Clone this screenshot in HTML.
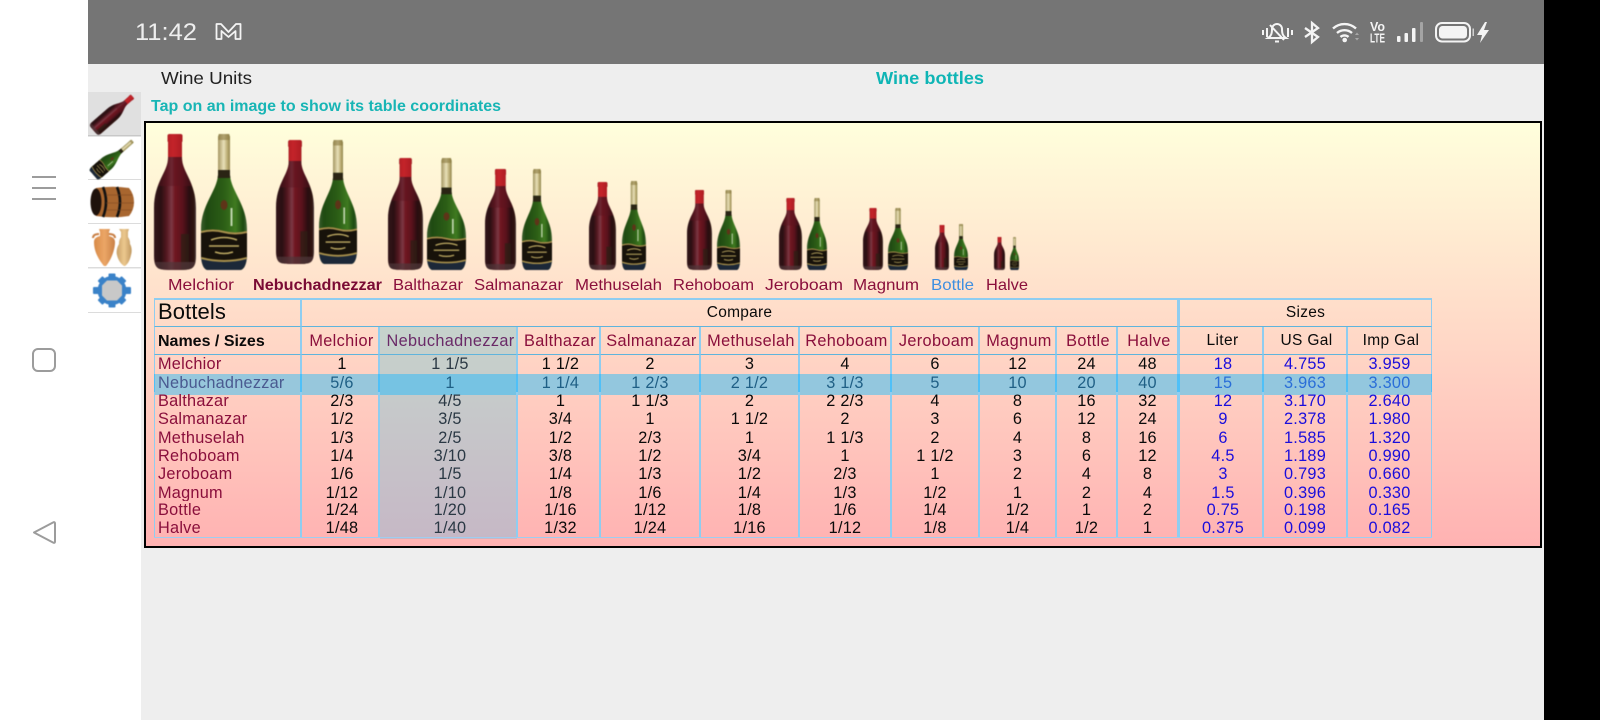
<!DOCTYPE html>
<html lang="en"><head><meta charset="utf-8"><title>Wine Units</title>
<style>
html,body{margin:0;padding:0;width:1600px;height:720px;overflow:hidden;background:#eee;font-family:"Liberation Sans",sans-serif}
.a{position:absolute}
#nav{left:0;top:0;width:88px;height:720px;background:#fff}
#side{left:88px;top:92px;width:53px;height:628px;background:#fff}
#blk{left:1544px;top:0;width:56px;height:720px;background:#000}
#bar{left:88px;top:0;width:1456px;height:64px;background:#757575}
#panel{left:144px;top:121px;width:1398px;height:427px;box-sizing:border-box;border:2px solid #000;background:linear-gradient(#ffffdc,#ffb2b2)}
#gray{left:380px;top:327px;width:137px;height:212px;background:linear-gradient(#c6d3cc,#c6b8c6)}
#hl{left:154px;top:374px;width:1278px;height:21px;background:linear-gradient(90deg,#97c7dc 0,#97c7dc 225px,#76c3e3 226px,#76c3e3 363px,#93c7de 364px)}
table{position:absolute;left:154px;top:298px;width:1278px;table-layout:fixed;border-collapse:separate;border-spacing:0;border-bottom:1px solid #9fcdf0;font-size:16.3px;color:#0a0a0a}
td{padding:1px 0 0;margin:0;text-align:center;vertical-align:top;box-sizing:border-box;border-left:1px solid #8fcdf0;border-right:1px solid #8fcdf0;line-height:16px;white-space:nowrap;overflow:hidden;letter-spacing:.25px}
.h1 td{padding:0;vertical-align:middle;border-top:2px solid #8fcdf0;border-bottom:1px solid #5fb4dc;font-size:15.5px;line-height:18px}
.h2 td{padding:0 0 0 3px;vertical-align:middle;border-bottom:1px solid #5fb4dc;color:#8a0f3c;letter-spacing:.35px;line-height:18px}
td.k{color:#0a0a0a;font-size:15.5px}
td.l{text-align:left;padding-left:3px;color:#8a0f3c}
.h1 td.l{font-size:22px;color:#0a0a0a;padding:0 0 2px 3px;letter-spacing:.1px}
.h2 td.l{font-weight:bold;color:#0a0a0a;padding:2px 0 0 3px;font-size:16px;letter-spacing:0}
.h2 td.g{padding-left:5px}
td.b{color:#1a0ddc}
td.g{color:#2a3844}
.h2 td.g{color:#6a2a68}
td.x{border-left-width:2px}
.d td:nth-child(2),.d td:nth-child(3),.d td:nth-child(4),.d td:nth-child(12){padding-left:4px}
.d td.l{padding-left:3px}
.s td{color:#1f5f85;border-color:#4fc0f8}
.s td.l{color:#4a5a90}
.s td.b{color:#2a6ed8}
</style></head><body>
<svg width="0" height="0" style="position:absolute">
<defs>
<linearGradient id="rg"><stop offset="0" stop-color="#33161a"/><stop offset=".16" stop-color="#2a0f12"/><stop offset=".3" stop-color="#541820"/><stop offset=".42" stop-color="#7c3844"/><stop offset=".5" stop-color="#701620"/><stop offset=".68" stop-color="#5a121c"/><stop offset=".84" stop-color="#280d10"/><stop offset=".95" stop-color="#30140f"/><stop offset="1" stop-color="#504040"/></linearGradient>
<linearGradient id="gg"><stop offset="0" stop-color="#3a5c2c"/><stop offset=".12" stop-color="#1f4a12"/><stop offset=".5" stop-color="#2c5e16"/><stop offset=".75" stop-color="#3f7a20"/><stop offset=".92" stop-color="#1d4a10"/><stop offset="1" stop-color="#4a6a3a"/></linearGradient>
<linearGradient id="au"><stop offset="0" stop-color="#9a8a54"/><stop offset=".45" stop-color="#e8e0b8"/><stop offset=".7" stop-color="#b8aa70"/><stop offset="1" stop-color="#7a6a38"/></linearGradient>
<linearGradient id="cap"><stop offset="0" stop-color="#8e1118"/><stop offset=".45" stop-color="#c4242a"/><stop offset="1" stop-color="#8e1118"/></linearGradient>
<linearGradient id="am1" x2="1" y2="0"><stop offset="0" stop-color="#d88a48"/><stop offset=".5" stop-color="#eba666"/><stop offset="1" stop-color="#c98046"/></linearGradient>
<linearGradient id="am2" x2="1" y2="0"><stop offset="0" stop-color="#c8a068"/><stop offset=".5" stop-color="#ecc88e"/><stop offset="1" stop-color="#c09860"/></linearGradient>
<clipPath id="rc"><path d="M16 0h10q2.500 0 2.500 2v5l-.5 1v16c0 14 14 24 14 50v48c0 8-2 12-6 13c-4 1-10 1-15 1c-5 0-11 0-15-1c-4-1-6-5-6-13v-48c0-26 14-36 14-50v-16l-.5-1v-5q0-2 2.500-2z"/></clipPath>
<clipPath id="gc"><path d="M18 0h10l1 3v38c1 16 17 30 17 54v25c0 10-3 16-7 16h-32c-4 0-7-6-7-16v-25c0-24 16-38 17-54v-38z"/></clipPath>
<symbol id="red" viewBox="0 0 42 136" preserveAspectRatio="none">
<g clip-path="url(#rc)"><rect width="42" height="136" fill="url(#rg)"/><rect y="22" width="42" height="30" fill="#5a141e" opacity=".45"/><rect x="27" y="100" width="8" height="36" fill="#2c2014" opacity=".7"/><rect y="0" width="42" height="23" fill="url(#cap)"/><rect y="128" width="42" height="8" fill="#50383a" opacity=".7"/></g>
</symbol>
<symbol id="grn" viewBox="0 0 46 136" preserveAspectRatio="none">
<g clip-path="url(#gc)"><rect width="46" height="136" fill="url(#gg)"/><rect x="16" width="15" height="36" fill="url(#au)"/><rect x="14" y="0" width="18" height="6" fill="#8a7a40" opacity=".6"/><rect x="14" y="36" width="18" height="8" fill="#2a2414"/><rect x="29.500" y="74" width="2" height="18" fill="#d8e8c8" opacity=".85"/><ellipse cx="23" cy="71" rx="3.500" ry="5" fill="#5e3418"/><rect y="122" width="46" height="14" fill="#1c2838"/><path d="M0 97q12-3 23 0t23 0v27q-23 6-46 0z" fill="#17120a"/><path d="M0 98q12-3 23 0t23 0M0 124q23 6 46 0" fill="none" stroke="#a8904c" stroke-width="2"/><path d="M10 106q13-5 26 0M8 112h30M14 118q9 3 18 0" fill="none" stroke="#c0ac64" stroke-width="1.500"/></g>
</symbol>
</defs>
</svg>

<div class="a" id="nav"></div>
<div class="a" id="side"></div>
<div class="a" id="blk"></div>
<div class="a" id="bar"></div>
<div class="a" id="panel"></div>
<div class="a" id="gray"></div>
<div class="a" id="hl"></div>

<svg class="a" style="left:0;top:0" width="1600" height="720" viewBox="0 0 1600 720" font-family="'Liberation Sans',sans-serif">
<!-- nav -->
<g stroke="#9c9c9c" stroke-width="2" fill="none">
<path d="M32 177h24M32 188h24M32 199h24"/>
<rect x="33" y="349" width="22" height="22" rx="5"/>
<path d="M34 532.500 53 522.500q2-1 2 1v18q0 2-2 1z" stroke-linejoin="round"/>
</g>
<!-- status bar -->
<text x="135" y="40" font-size="24.500" fill="#eee" textLength="62" lengthAdjust="spacingAndGlyphs">11:42</text>
<g fill="none" stroke="#f4f4f4" stroke-width="2">
<path d="M216.500 24h4.500l7.500 8 7.500-8h4.500v15h-5v-8l-7 6-7-6v8h-5z" stroke-width="1.800" stroke-linejoin="round"/>
<!-- bell -->
<path d="M1277 24a5 5 0 0 1 5 5c0 5 1 7 4 9h-18c3-2 4-4 4-9a5 5 0 0 1 5-5zM1270 25l14 15M1275 41.500h4" stroke-width="2"/>
<path d="M1263 30v5M1267 28v9M1288 28v9M1292 30v5" stroke-width="2"/>
<!-- bluetooth -->
<path d="M1305 28l13 9-6 5V23l6 5-13 9" stroke-width="2.300"/>
<!-- wifi -->
<path d="M1333 28.500a17 17 0 0 1 23 0M1337 33a11.500 11.500 0 0 1 15 0M1340.500 37a6 6 0 0 1 8 0" stroke-width="2.400"/>
<!-- battery -->
<rect x="1436" y="23" width="34" height="18.500" rx="6"/>
</g>
<circle cx="1344.700" cy="40" r="2.300" fill="#f4f4f4"/>
<path d="M1355 35l2-2.500 2 2.500zM1355 38l2 2.500 2-2.500z" fill="#a8a8a8"/>
<text x="1370" y="31" font-size="12.500" font-weight="bold" fill="#f4f4f4" textLength="15" lengthAdjust="spacingAndGlyphs">Vo</text>
<text x="1370" y="42.500" font-size="12.500" font-weight="bold" fill="#f4f4f4" textLength="15" lengthAdjust="spacingAndGlyphs">LTE</text>
<g fill="#f4f4f4">
<rect x="1397" y="36" width="3.500" height="6" rx="1"/><rect x="1404.500" y="33" width="3.500" height="9" rx="1"/><rect x="1412" y="28" width="3.500" height="14" rx="1"/>
<rect x="1420" y="22" width="3" height="20" rx="1" fill="#a4a4a4"/>
<rect x="1439" y="26" width="28" height="12.500" rx="3.500"/>
<rect x="1472.500" y="28.500" width="1.500" height="7.500" fill="#d0d0d0"/>
<path d="M1485 22l-8 13h5l-2 8 9-13h-5l3-8z"/>
</g>
<!-- headings -->
<text x="161" y="84" font-size="17.500" fill="#222" textLength="91" lengthAdjust="spacingAndGlyphs">Wine Units</text>
<text x="876" y="84" font-size="17.500" font-weight="bold" fill="#0fb5b5" textLength="108" lengthAdjust="spacingAndGlyphs">Wine bottles</text>
<text x="151" y="111" font-size="16" font-weight="bold" fill="#18b5b5" textLength="350" lengthAdjust="spacingAndGlyphs">Tap on an image to show its table coordinates</text>
<!-- sidebar -->
<rect x="88" y="92" width="53" height="43" fill="#e0e0e0"/>
<g fill="#dcdcdc">
<rect x="88" y="135" width="53" height="1.500" fill="#c8c8c8"/><rect x="88" y="179" width="53" height="1"/><rect x="88" y="223" width="53" height="1"/><rect x="88" y="267" width="53" height="1.500"/><rect x="88" y="312" width="53" height="1"/>
</g>
<g style="filter:blur(.4px)">
<g transform="translate(113 113.500) rotate(49)"><use href="#red" x="-7.500" y="-26" width="15" height="52"/></g>
<g transform="translate(113 158) rotate(49)"><use href="#grn" x="-7.500" y="-26" width="15" height="52"/></g>
<!-- barrel -->
<path d="M96 188q17-2.500 33 0q5 6 5 14t-5 14q-16 2.500-33 0q-5-6-5-14t5-14z" fill="#a8662f"/>
<ellipse cx="96" cy="202" rx="5.500" ry="13.500" fill="#1e120c"/>
<path d="M103 187q6 15 0 30M117 187q6 15 0 30" fill="none" stroke="#111" stroke-width="2.600"/>
<path d="M106 195h26M106 203h28M106 210h26" stroke="#7a4420" stroke-width="1" opacity=".5"/>
<!-- amphorae -->
<path d="M93 238q0-4 6-4M115 238q0-4-6-4" fill="none" stroke="#c98046" stroke-width="2"/>
<path d="M99 229h11l-1 3v4c3 1 6 2 6 6c0 8-4 18-9 24h-2c-5-6-10-14-10-24c0-4 3-5 6-6v-4z" fill="url(#am1)"/>
<path d="M119 229h10l-1 3v5c2 3 2 5 2 7c2 3 2 8 1 11c-1 5-3 9-6 11h-1c-3-2-6-6-7-11c-1-3 0-8 2-11c0-2 0-4 2-7v-5z" fill="url(#am2)"/>
<!-- gear -->
<g transform="translate(112 290.500)">
<g fill="#3a82c8"><rect x="-3.500" y="-17" width="7" height="34" rx="1"/><rect x="-3.500" y="-17" width="7" height="34" rx="1" transform="rotate(45)"/><rect x="-3.500" y="-19" width="7" height="38" rx="1" transform="rotate(90)"/><rect x="-3.500" y="-17" width="7" height="34" rx="1" transform="rotate(135)"/><circle r="14.500"/></g>
<path d="M-5-10h10l5 5v10l-5 5h-10l-5-5v-10z" fill="#c8c8c8"/>
</g>
<!-- bottles -->
<use href="#red" x="154" y="134" width="42" height="136"/><use href="#grn" x="201" y="134" width="46" height="136"/>
<use href="#red" x="276" y="140" width="38" height="124"/><use href="#grn" x="319" y="140" width="38" height="124"/>
<use href="#red" x="388" y="158" width="35" height="112"/><use href="#grn" x="427" y="158" width="39" height="112"/>
<use href="#red" x="485" y="169" width="31" height="101"/><use href="#grn" x="522" y="169" width="30" height="101"/>
<use href="#red" x="589" y="182" width="27" height="88"/><use href="#grn" x="622" y="181" width="24" height="89"/>
<use href="#red" x="687" y="190" width="25" height="80"/><use href="#grn" x="717" y="190" width="23" height="80"/>
<use href="#red" x="779" y="198" width="23" height="72"/><use href="#grn" x="807" y="198" width="20" height="72"/>
<use href="#red" x="863" y="208" width="20" height="62"/><use href="#grn" x="888" y="208" width="20" height="62"/>
<use href="#red" x="935" y="225" width="14" height="45"/><use href="#grn" x="954" y="224" width="14" height="46"/>
<use href="#red" x="994" y="237" width="11" height="33"/><use href="#grn" x="1010" y="237" width="9" height="33"/>
</g>
<!-- labels -->
<g font-size="16" fill="#8a0f3c">
<text x="168" y="290" textLength="66" lengthAdjust="spacingAndGlyphs">Melchior</text>
<text x="253" y="290" textLength="129" lengthAdjust="spacingAndGlyphs" font-weight="bold" fill="#7a0a34">Nebuchadnezzar</text>
<text x="393" y="290" textLength="70" lengthAdjust="spacingAndGlyphs">Balthazar</text>
<text x="474" y="290" textLength="89" lengthAdjust="spacingAndGlyphs">Salmanazar</text>
<text x="575" y="290" textLength="87" lengthAdjust="spacingAndGlyphs">Methuselah</text>
<text x="673" y="290" textLength="81" lengthAdjust="spacingAndGlyphs">Rehoboam</text>
<text x="765" y="290" textLength="78" lengthAdjust="spacingAndGlyphs">Jeroboam</text>
<text x="853" y="290" textLength="66" lengthAdjust="spacingAndGlyphs">Magnum</text>
<text x="931" y="290" textLength="43" lengthAdjust="spacingAndGlyphs" fill="#3f8fe0">Bottle</text>
<text x="986" y="290" textLength="42" lengthAdjust="spacingAndGlyphs">Halve</text>
</g>
</svg>

<table>
<colgroup><col style="width:147px"><col style="width:78px"><col style="width:138px"><col style="width:83px"><col style="width:100px"><col style="width:99px"><col style="width:92px"><col style="width:88px"><col style="width:77px"><col style="width:61px"><col style="width:61px"><col style="width:85px"><col style="width:84px"><col style="width:85px"></colgroup>
<tr class="h1" style="height:29px"><td class="l">Bottels</td><td colspan="10" class="k">Compare</td><td colspan="3" class="k x">Sizes</td></tr>
<tr class="h2" style="height:28px"><td class="l">Names / Sizes</td><td>Melchior</td><td class="g">Nebuchadnezzar</td><td>Balthazar</td><td>Salmanazar</td><td>Methuselah</td><td>Rehoboam</td><td>Jeroboam</td><td>Magnum</td><td>Bottle</td><td>Halve</td><td class="k x">Liter</td><td class="k">US Gal</td><td class="k">Imp Gal</td></tr>
<tr class="d" style="height:19px"><td class="l">Melchior</td><td>1</td><td class="g">1 1/5</td><td>1 1/2</td><td>2</td><td>3</td><td>4</td><td>6</td><td>12</td><td>24</td><td>48</td><td class="b x">18</td><td class="b">4.755</td><td class="b">3.959</td></tr>
<tr class="d s" style="height:18px"><td class="l">Nebuchadnezzar</td><td>5/6</td><td class="g">1</td><td>1 1/4</td><td>1 2/3</td><td>2 1/2</td><td>3 1/3</td><td>5</td><td>10</td><td>20</td><td>40</td><td class="b x">15</td><td class="b">3.963</td><td class="b">3.300</td></tr>
<tr class="d" style="height:18px"><td class="l">Balthazar</td><td>2/3</td><td class="g">4/5</td><td>1</td><td>1 1/3</td><td>2</td><td>2 2/3</td><td>4</td><td>8</td><td>16</td><td>32</td><td class="b x">12</td><td class="b">3.170</td><td class="b">2.640</td></tr>
<tr class="d" style="height:19px"><td class="l">Salmanazar</td><td>1/2</td><td class="g">3/5</td><td>3/4</td><td>1</td><td>1 1/2</td><td>2</td><td>3</td><td>6</td><td>12</td><td>24</td><td class="b x">9</td><td class="b">2.378</td><td class="b">1.980</td></tr>
<tr class="d" style="height:18px"><td class="l">Methuselah</td><td>1/3</td><td class="g">2/5</td><td>1/2</td><td>2/3</td><td>1</td><td>1 1/3</td><td>2</td><td>4</td><td>8</td><td>16</td><td class="b x">6</td><td class="b">1.585</td><td class="b">1.320</td></tr>
<tr class="d" style="height:18px"><td class="l">Rehoboam</td><td>1/4</td><td class="g">3/10</td><td>3/8</td><td>1/2</td><td>3/4</td><td>1</td><td>1 1/2</td><td>3</td><td>6</td><td>12</td><td class="b x">4.5</td><td class="b">1.189</td><td class="b">0.990</td></tr>
<tr class="d" style="height:19px"><td class="l">Jeroboam</td><td>1/6</td><td class="g">1/5</td><td>1/4</td><td>1/3</td><td>1/2</td><td>2/3</td><td>1</td><td>2</td><td>4</td><td>8</td><td class="b x">3</td><td class="b">0.793</td><td class="b">0.660</td></tr>
<tr class="d" style="height:17px"><td class="l">Magnum</td><td>1/12</td><td class="g">1/10</td><td>1/8</td><td>1/6</td><td>1/4</td><td>1/3</td><td>1/2</td><td>1</td><td>2</td><td>4</td><td class="b x">1.5</td><td class="b">0.396</td><td class="b">0.330</td></tr>
<tr class="d" style="height:18px"><td class="l">Bottle</td><td>1/24</td><td class="g">1/20</td><td>1/16</td><td>1/12</td><td>1/8</td><td>1/6</td><td>1/4</td><td>1/2</td><td>1</td><td>2</td><td class="b x">0.75</td><td class="b">0.198</td><td class="b">0.165</td></tr>
<tr class="d" style="height:18px"><td class="l">Halve</td><td>1/48</td><td class="g">1/40</td><td>1/32</td><td>1/24</td><td>1/16</td><td>1/12</td><td>1/8</td><td>1/4</td><td>1/2</td><td>1</td><td class="b x">0.375</td><td class="b">0.099</td><td class="b">0.082</td></tr>
</table>
</body></html>
